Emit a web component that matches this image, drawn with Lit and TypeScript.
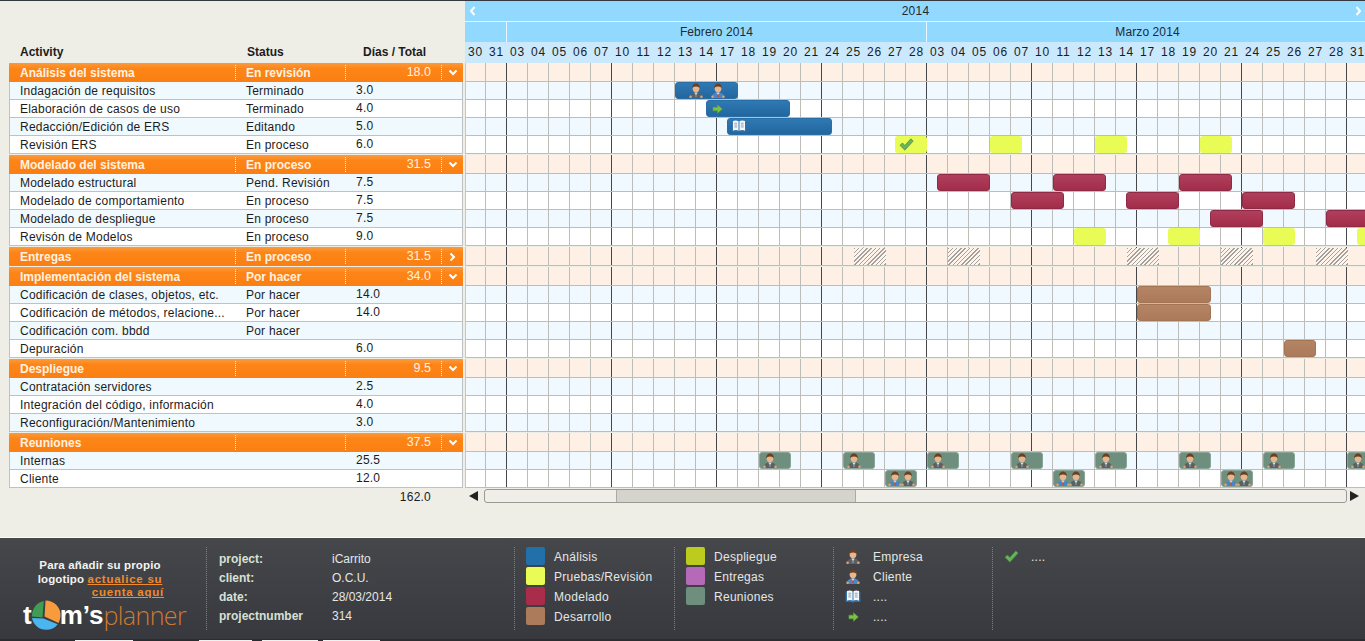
import { LitElement, html, css, svg } from 'lit';
import { customElement } from 'lit/decorators.js';

type IconKind = 'empresa' | 'cliente' | 'book' | 'arrow' | 'check';

interface Bar {
  x: number;
  w: number;
  kind: 'blue' | 'yellow' | 'red' | 'brown' | 'green' | 'hatch';
  icons?: { kind: IconKind; x: number }[];
}

interface Task {
  name: string;
  status: string;
  days: string;
  bars: Bar[];
}

interface Group {
  name: string;
  status: string;
  total: string;
  open: boolean;
  bars: Bar[];
  tasks: Task[];
}

// bar x values are page pixels, the gantt origin gets subtracted on render
const GANTT_X = 466;

const yellow = (x: number, w = 32): Bar => ({ x, w, kind: 'yellow' });
const red = (x: number): Bar => ({ x, w: 53, kind: 'red' });
const hatch = (x: number): Bar => ({ x, w: 32, kind: 'hatch' });
const meet = (x: number): Bar => ({ x, w: 32, kind: 'green', icons: [{ kind: 'empresa', x: 3 }] });
const meetClient = (x: number): Bar => ({
  x,
  w: 32,
  kind: 'green',
  icons: [
    { kind: 'cliente', x: 2 },
    { kind: 'empresa', x: 15 },
  ],
});

const GROUPS: Group[] = [
  {
    name: 'Análisis del sistema',
    status: 'En revisión',
    total: '18.0',
    open: true,
    bars: [],
    tasks: [
      {
        name: 'Indagación de requisitos',
        status: 'Terminado',
        days: '3.0',
        bars: [
          {
            x: 675,
            w: 63,
            kind: 'blue',
            icons: [
              { kind: 'empresa', x: 13 },
              { kind: 'cliente', x: 35 },
            ],
          },
        ],
      },
      {
        name: 'Elaboración de casos de uso',
        status: 'Terminado',
        days: '4.0',
        bars: [{ x: 706, w: 84, kind: 'blue', icons: [{ kind: 'arrow', x: 5 }] }],
      },
      {
        name: 'Redacción/Edición de ERS',
        status: 'Editando',
        days: '5.0',
        bars: [{ x: 727, w: 105, kind: 'blue', icons: [{ kind: 'book', x: 3 }] }],
      },
      {
        name: 'Revisión ERS',
        status: 'En proceso',
        days: '6.0',
        bars: [
          { x: 895, w: 32, kind: 'yellow', icons: [{ kind: 'check', x: 4 }] },
          yellow(990),
          yellow(1095),
          yellow(1200),
        ],
      },
    ],
  },
  {
    name: 'Modelado del sistema',
    status: 'En proceso',
    total: '31.5',
    open: true,
    bars: [],
    tasks: [
      { name: 'Modelado estructural', status: 'Pend. Revisión', days: '7.5', bars: [red(937), red(1053), red(1179)] },
      { name: 'Modelado de comportamiento', status: 'En proceso', days: '7.5', bars: [red(1011), red(1126), red(1242)] },
      { name: 'Modelado de despliegue', status: 'En proceso', days: '7.5', bars: [red(1210), red(1326)] },
      {
        name: 'Revisón de Modelos',
        status: 'En proceso',
        days: '9.0',
        bars: [yellow(1074), yellow(1168), yellow(1263), yellow(1357)],
      },
    ],
  },
  {
    name: 'Entregas',
    status: 'En proceso',
    total: '31.5',
    open: false,
    bars: [hatch(854), hatch(948), hatch(1127), hatch(1221), hatch(1316)],
    tasks: [],
  },
  {
    name: 'Implementación del sistema',
    status: 'Por hacer',
    total: '34.0',
    open: true,
    bars: [],
    tasks: [
      {
        name: 'Codificación de clases, objetos, etc.',
        status: 'Por hacer',
        days: '14.0',
        bars: [{ x: 1137, w: 74, kind: 'brown' }],
      },
      {
        name: 'Codificación de métodos, relacione...',
        status: 'Por hacer',
        days: '14.0',
        bars: [{ x: 1137, w: 74, kind: 'brown' }],
      },
      { name: 'Codificación com. bbdd', status: 'Por hacer', days: '', bars: [] },
      { name: 'Depuración', status: '', days: '6.0', bars: [{ x: 1284, w: 32, kind: 'brown' }] },
    ],
  },
  {
    name: 'Despliegue',
    status: '',
    total: '9.5',
    open: true,
    bars: [],
    tasks: [
      { name: 'Contratación servidores', status: '', days: '2.5', bars: [] },
      { name: 'Integración del código, información', status: '', days: '4.0', bars: [] },
      { name: 'Reconfiguración/Mantenimiento', status: '', days: '3.0', bars: [] },
    ],
  },
  {
    name: 'Reuniones',
    status: '',
    total: '37.5',
    open: true,
    bars: [],
    tasks: [
      {
        name: 'Internas',
        status: '',
        days: '25.5',
        bars: [759, 843, 927, 1011, 1095, 1179, 1263, 1347].map(meet),
      },
      { name: 'Cliente', status: '', days: '12.0', bars: [885, 1053, 1221].map(meetClient) },
    ],
  },
];

const WEEK = ['03', '04', '05', '06', '07', '10', '11', '12', '13', '14', '17', '18', '19', '20', '21', '24', '25', '26', '27', '28'];
const DAYS = ['30', '31', ...WEEK, ...WEEK, '31'];

const person = (suit: string, tie: string) => svg`
  <path d="M1 15C1 11 3 9.500 7 9.500S13 11 13 15z" fill=${suit} />
  <rect x="0.300" y="12.500" width="2.500" height="2.500" rx="1" fill="#d9a273" />
  <rect x="11.200" y="12.500" width="2.500" height="2.500" rx="1" fill="#d9a273" />
  <path d="M5.300 9.500L7 12.500l1.700-3z" fill="#e4e6e2" />
  <path d="M6.500 10.800h1l.3 3.200H6.200z" fill=${tie} />
  <ellipse cx="7" cy="5.300" rx="3.400" ry="3.900" fill="#e6b78e" />
  <path d="M3.300 5.800C2.800 1.700 5 .4 7 .4s4.200 1.300 3.700 5.400C10.200 4.300 9.200 3.600 7 3.600S3.800 4.300 3.300 5.800z" fill="#6b3f22" />
`;

function icon(kind: IconKind) {
  switch (kind) {
    case 'empresa':
      return html`<svg width="14" height="15" viewBox="0 0 14 15">${person('#5c6065', '#8d9094')}</svg>`;
    case 'cliente':
      return html`<svg width="14" height="15" viewBox="0 0 14 15">${person('#4a86c4', '#c8453c')}</svg>`;
    case 'book':
      return html`<svg width="16" height="13" viewBox="0 0 16 14">
        <path d="M0 1.500h16V13H9.500L8 14l-1.500-1H0z" fill="#2d6fa8" />
        <path d="M1.500 1c2-.8 4.500-.8 6 .3V11.500c-1.500-.8-4-.8-6 0zM14.500 1c-2-.8-4.500-.8-6 .3V11.500c1.500-.8 4-.8 6 0z" fill="#f4f8fb" />
        <path d="M3 3.500h3M3 5.500h3M3 7.500h3M10 3.500h3M10 5.500h3M10 7.500h3" stroke="#8a9cab" stroke-width="1" />
      </svg>`;
    case 'arrow':
      return html`<svg width="11" height="10" viewBox="0 0 12 11">
        <path d="M1 3.500h5V.8L11.300 5.500 6 10.200V7.500H1z" fill="#7cc242" stroke="#5c9e36" stroke-width=".7" />
      </svg>`;
    case 'check':
      return html`<svg width="15" height="13" viewBox="0 0 17 15">
        <path d="M1 8.500l2.800-2.800 2.800 2.900L13.500 1l2.700 2.600L6.600 14z" fill="#67b45c" stroke="#47863f" stroke-width=".8" />
      </svg>`;
  }
}

const chevron = (open: boolean) =>
  open
    ? html`<svg width="10" height="8" viewBox="0 0 10 8"><path d="M1.500 1.500L5 5l3.500-3.500" fill="none" stroke="#fff" stroke-width="2" /></svg>`
    : html`<svg width="8" height="10" viewBox="0 0 8 10"><path d="M1.500 1.500L5 5 1.500 8.500" fill="none" stroke="#fff" stroke-width="2" /></svg>`;

@customElement('app-root')
export class AppRoot extends LitElement {
  static styles = css`
    :host {
      display: block;
      width: 1365px;
      height: 641px;
      overflow: hidden;
      font-family: 'Liberation Sans', Arial, sans-serif;
      font-size: 12px;
      letter-spacing: 0.22px;
      color: #1c1c1c;
      background: #eeede6;
    }
    .page {
      display: flex;
      flex-direction: column;
      height: 100%;
      border-top: 1px solid #33393f;
      box-sizing: border-box;
    }
    .main {
      display: flex;
      flex: 1;
      min-height: 0;
    }
    .left {
      width: 454px;
      margin: 0 2px 0 9px;
      flex: none;
    }
    .head {
      display: grid;
      grid-template-columns: 227px 116px 100px;
      height: 62px;
      box-sizing: border-box;
      padding: 44px 0 0 11px;
      font-weight: bold;
      line-height: 14px;
      letter-spacing: 0;
    }
    .group {
      margin-bottom: 1px;
    }
    .g-row,
    .t-row {
      display: grid;
      grid-template-columns: 226px 110px 96px 22px;
      align-items: center;
    }
    .g-row {
      height: 19px;
      color: #fff2e2;
      font-weight: bold;
      letter-spacing: 0;
      background: linear-gradient(#fb9a3c, #fd8517 30%, #fb7f12);
    }
    .g-row > div {
      height: 15px;
      line-height: 16px;
      white-space: nowrap;
    }
    .g-row .name {
      padding-left: 11px;
    }
    .g-row .st,
    .g-row .tot,
    .g-row .chev {
      border-left: 1px dotted #ffe6c8;
    }
    .g-row .st {
      padding-left: 10px;
    }
    .g-row .tot {
      font-weight: normal;
      font-size: 12.500px;
      line-height: 15px;
      text-align: right;
      padding-right: 10px;
    }
    .g-row .chev {
      display: flex;
      align-items: center;
      justify-content: center;
    }
    .t-row {
      height: 18px;
      box-sizing: border-box;
      border: 1px solid #bfc2c2;
      border-top: 0;
      background: #fff;
      line-height: 14px;
      white-space: nowrap;
    }
    .t-row.odd {
      background: #eff9fe;
    }
    .t-row .name {
      padding-left: 10px;
      overflow: hidden;
    }
    .t-row .st {
      padding-left: 10px;
    }
    .t-row .dy {
      padding-left: 10px;
      position: relative;
      top: -1px;
    }
    .sum {
      padding: 1px 32px 0 0;
      text-align: right;
      line-height: 14px;
    }
    .right {
      flex: 1;
      min-width: 0;
      overflow: hidden;
    }
    .h-year,
    .h-month {
      display: flex;
      align-items: center;
      height: 20px;
      background: #92d9ff;
      color: #1e2a35;
    }
    .h-year {
      justify-content: space-between;
      padding: 0 3px 0 4px;
      border-bottom: 1px solid #e8f6ff;
    }
    .h-month > div {
      height: 100%;
      line-height: 21px;
      text-align: center;
      flex: none;
      box-sizing: border-box;
    }
    .h-month .lead {
      width: 41px;
    }
    .h-month .feb {
      width: 420px;
      border-left: 1px solid #e8f6ff;
      letter-spacing: 0.1px;
    }
    .h-month .mar {
      width: 442px;
      border-left: 1px solid #e8f6ff;
      letter-spacing: 0.1px;
    }
    .h-days {
      display: grid;
      grid-template-columns: repeat(43, 21px);
      height: 21px;
      width: 903px;
      line-height: 21px;
      text-align: center;
      background: #cbe9fd;
      letter-spacing: 0.8px;
    }
    .g-group {
      margin-bottom: 1px;
    }
    .lane {
      position: relative;
      box-sizing: border-box;
      height: 18px;
      border-left: 1px solid #c6c6c2;
      border-bottom: 1px solid #bdbdb9;
      background-color: #fff;
      background-image: linear-gradient(to right, transparent 40px, #45474a 40px, #45474a 41px, transparent 41px),
        linear-gradient(to left, #bcbcb8 1px, transparent 1px);
      background-size: 105px 100%, 21px 100%;
      background-position: 0 0, -1px 0;
    }
    .lane.odd {
      background-color: #f0f9ff;
    }
    .lane.head-lane {
      height: 19px;
      background-color: #fff0e6;
    }
    .bar {
      position: absolute;
      top: 0;
      height: 17px;
      box-sizing: border-box;
      border-radius: 3px;
    }
    .bar .ic {
      position: absolute;
      top: 0;
      bottom: 0;
      display: flex;
      align-items: center;
    }
    .head-lane .bar {
      top: 1px;
    }
    .blue {
      background: linear-gradient(#2f79b3, #22669f);
      border: 1px solid #2a6ea5;
    }
    .yellow {
      background: #e9fb55;
    }
    .red {
      background: linear-gradient(#b03f5c, #a22d4b);
      border: 1px solid #8e2a45;
    }
    .brown {
      background: linear-gradient(#b48465, #aa7a5a);
      border: 1px solid #a37555;
    }
    .green {
      background: #6f8f7e;
      border: 1px solid #8aa597;
    }
    .hatch {
      border-radius: 0;
      background: repeating-linear-gradient(135deg, #a3a19d 0 1px, #fff3ea 1px 3px);
    }
    .scroll {
      display: flex;
      align-items: center;
      height: 14px;
      margin-top: 1px;
      padding-left: 4px;
    }
    .arrow {
      width: 0;
      height: 0;
      border-top: 5px solid transparent;
      border-bottom: 5px solid transparent;
    }
    .arrow.l {
      border-right: 9px solid #222;
      margin-right: 6px;
    }
    .arrow.r {
      border-left: 9px solid #222;
      margin-left: 3px;
    }
    .track {
      width: 863px;
      height: 14px;
      box-sizing: border-box;
      border: 1px solid #9a9a94;
      border-radius: 3px;
      padding-left: 131px;
      background: #efeee8;
    }
    .thumb {
      width: 240px;
      height: 100%;
      box-sizing: border-box;
      background: #d4d4cc;
      border-left: 1px solid #aaa;
      border-right: 1px solid #aaa;
    }
    .foot {
      display: flex;
      flex: none;
      height: 102px;
      box-sizing: border-box;
      padding: 9px 0 9px;
      border-top: 1px solid #fbfbf7;
      background: linear-gradient(#45474b, #38393e);
      color: #e4e7e4;
    }
    .logo {
      width: 206px;
      flex: none;
      box-sizing: border-box;
      padding-top: 12px;
    }
    .blurb {
      margin: 0 0 0 36px;
      width: 128px;
      font-size: 11.500px;
      font-weight: bold;
      line-height: 13.500px;
      letter-spacing: 0.15px;
      text-align: center;
      color: #f3f3f0;
    }
    .blurb a {
      color: #f08a2c;
      text-decoration: underline;
      letter-spacing: 0.75px;
    }
    .blurb .r {
      text-align: right;
    }
    .mark {
      display: flex;
      align-items: center;
      height: 30px;
      padding-left: 23px;
      font-size: 26px;
      line-height: 30px;
      letter-spacing: 0;
      color: #fff;
      font-weight: bold;
    }
    .mark svg {
      margin: 0 -1px 0 -1px;
      flex: none;
    }
    .mark em {
      font-family: 'Open Sans', 'Liberation Sans', sans-serif;
      font-style: normal;
      font-weight: 300;
      font-size: 25px;
      color: #cf7a2e;
      letter-spacing: -0.6px;
    }
    .sec {
      flex: none;
      box-sizing: border-box;
      border-left: 1px dotted #7d7f80;
    }
    .info {
      width: 308px;
      padding: 3px 0 0 12px;
      display: grid;
      grid-template-columns: 113px 1fr;
      grid-auto-rows: 19px;
      line-height: 19px;
      letter-spacing: 0;
    }
    .info b {
      color: #d9e0d4;
    }
    .legend {
      width: 160px;
      padding-left: 11px;
      display: grid;
      grid-auto-rows: 20px;
      align-content: start;
      letter-spacing: 0.28px;
      line-height: 21px;
    }
    .legend.second {
      width: 159px;
    }
    .legend > div {
      display: flex;
      align-items: flex-start;
    }
    .sw {
      width: 19px;
      height: 18px;
      border-radius: 2px;
      margin-right: 9px;
      flex: none;
    }
    .icons {
      width: 159px;
      padding-left: 9px;
    }
    .icons .ic,
    .tail .ic {
      width: 20px;
      height: 19px;
      margin-right: 10px;
      flex: none;
      display: flex;
      justify-content: center;
      align-items: center;
    }
    .tail {
      width: auto;
      padding-left: 8px;
    }
    .end {
      flex: none;
      display: flex;
      height: 2px;
      background: #2a2c30;
    }
    .end i {
      margin-top: 1px;
      height: 1px;
      background: #f0f0ee;
    }
  `;

  private renderBar(b: Bar) {
    return html`<div class="bar ${b.kind}" style="left:${b.x - GANTT_X}px;width:${b.w}px">
      ${b.icons?.map((i) => html`<span class="ic" style="left:${i.x}px">${icon(i.kind)}</span>`)}
    </div>`;
  }

  private renderLeft() {
    return GROUPS.map(
      (g) => html`<div class="group">
        <div class="g-row">
          <div class="name">${g.name}</div>
          <div class="st">${g.status}</div>
          <div class="tot">${g.total}</div>
          <div class="chev">${chevron(g.open)}</div>
        </div>
        ${g.tasks.map(
          (t, i) => html`<div class="t-row ${i % 2 === 0 ? 'odd' : ''}">
            <div class="name">${t.name}</div>
            <div class="st">${t.status}</div>
            <div class="dy">${t.days}</div>
            <div></div>
          </div>`
        )}
      </div>`
    );
  }

  private renderLanes() {
    return GROUPS.map(
      (g) => html`<div class="g-group">
        <div class="lane head-lane">${g.bars.map((b) => this.renderBar(b))}</div>
        ${g.tasks.map(
          (t, i) => html`<div class="lane ${i % 2 === 0 ? 'odd' : ''}">${t.bars.map((b) => this.renderBar(b))}</div>`
        )}
      </div>`
    );
  }

  private renderFooter() {
    const swatch = (color: string, label: string) =>
      html`<div><span class="sw" style="background:${color}"></span>${label}</div>`;
    const iconRow = (kind: IconKind, label: string) =>
      html`<div><span class="ic">${icon(kind)}</span>${label}</div>`;
    return html`<div class="foot">
      <div class="logo">
        <div class="blurb">
          <div>Para añadir su propio</div>
          <div>logotipo <a>actualice su</a></div>
          <div class="r"><a>cuenta aquí</a></div>
        </div>
        <div class="mark">
          t<svg width="30" height="30" viewBox="0 0 30 30">
            <path d="M11.500 17.500L12.800 .9C6 2 1 8 .8 16.500z" fill="#3f9c52" />
            <path d="M13.500 16.500L14.500 .5C23 .6 29.500 7 29.500 15c0 3-.8 5.700-2 8z" fill="#f79b3c" />
            <path d="M12.500 18.500L26.700 24.300C24 28 20 29.800 15 29.800 8 29.800 2.500 25 1 18z" fill="#4ab5ee" />
          </svg>m’s<em>planner</em>
        </div>
      </div>
      <div class="sec info">
        <b>project:</b><span>iCarrito</span>
        <b>client:</b><span>O.C.U.</span>
        <b>date:</b><span>28/03/2014</span>
        <b>projectnumber</b><span>314</span>
      </div>
      <div class="sec legend">
        ${swatch('#2170aa', 'Análisis')}
        ${swatch('#e9fb55', 'Pruebas/Revisión')}
        ${swatch('#a92c4b', 'Modelado')}
        ${swatch('#ab7b5b', 'Desarrollo')}
      </div>
      <div class="sec legend second">
        ${swatch('#bccb1e', 'Despliegue')}
        ${swatch('#b56ab8', 'Entregas')}
        ${swatch('#6f8f7e', 'Reuniones')}
      </div>
      <div class="sec legend icons">
        ${iconRow('empresa', 'Empresa')}
        ${iconRow('cliente', 'Cliente')}
        ${iconRow('book', '....')}
        ${iconRow('arrow', '....')}
      </div>
      <div class="sec legend tail">${iconRow('check', '....')}</div>
    </div>`;
  }

  render() {
    return html`<div class="page">
      <div class="main">
        <div class="left">
          <div class="head"><span>Activity</span><span>Status</span><span>Días / Total</span></div>
          ${this.renderLeft()}
          <div class="sum">162.0</div>
        </div>
        <div class="right">
          <div class="h-year">
            <svg width="7" height="10" viewBox="0 0 7 10"><path d="M5.500 1L2 5l3.500 4" fill="none" stroke="#fff" stroke-width="2" /></svg>
            <span>2014</span>
            <svg width="7" height="10" viewBox="0 0 7 10"><path d="M1.500 1L5 5 1.500 9" fill="none" stroke="#fff" stroke-width="2" /></svg>
          </div>
          <div class="h-month">
            <div class="lead"></div>
            <div class="feb">Febrero 2014</div>
            <div class="mar">Marzo 2014</div>
          </div>
          <div class="h-days">${DAYS.map((d) => html`<div>${d}</div>`)}</div>
          ${this.renderLanes()}
          <div class="scroll">
            <div class="arrow l"></div>
            <div class="track"><div class="thumb"></div></div>
            <div class="arrow r"></div>
          </div>
        </div>
      </div>
      ${this.renderFooter()}
      <div class="end">
        <i style="margin-left:75px;width:58px"></i>
        <i style="margin-left:66px;width:53px"></i>
        <i style="margin-left:10px;width:56px"></i>
        <i style="margin-left:5px;width:57px"></i>
      </div>
    </div>`;
  }
}

declare global {
  interface HTMLElementTagNameMap {
    'app-root': AppRoot;
  }
}
